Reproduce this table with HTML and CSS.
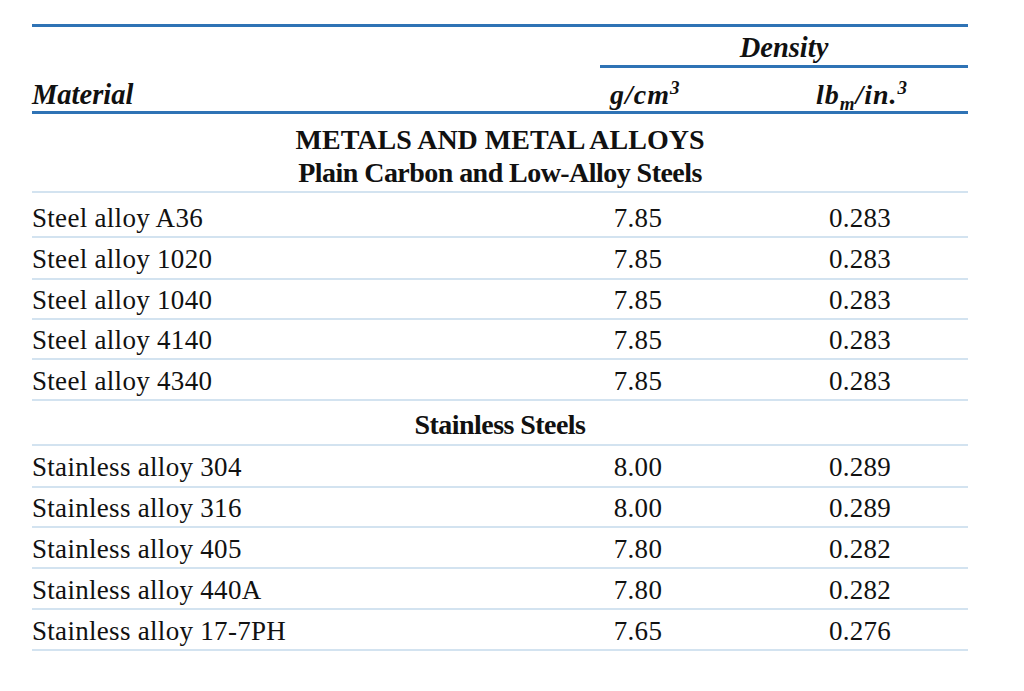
FILE: index.html
```html
<!DOCTYPE html>
<html>
<head>
<meta charset="utf-8">
<link rel="stylesheet" href="styles.css">
</head>
<body>
<table class="density-table">
  <colgroup>
    <col class="col-material">
    <col class="col-metric">
    <col class="col-imperial">
  </colgroup>
  <thead>
    <tr class="head-top">
      <th class="material" rowspan="2">Material</th>
      <th class="density" colspan="2">Density</th>
    </tr>
    <tr class="head-units">
      <th class="metric">g/cm<sup>3</sup></th>
      <th class="imperial">lb<sub>m</sub>/in.<sup>3</sup></th>
    </tr>
  </thead>
  <tbody>
    <tr class="section section-double">
      <td colspan="3"><div class="caps">METALS AND METAL ALLOYS</div><div class="sub">Plain Carbon and Low-Alloy Steels</div></td>
    </tr>
    <tr class="row first"><td>Steel alloy A36</td><td class="num">7.85</td><td class="num2">0.283</td></tr>
    <tr class="row second"><td>Steel alloy 1020</td><td class="num">7.85</td><td class="num2">0.283</td></tr>
    <tr class="row short"><td>Steel alloy 1040</td><td class="num">7.85</td><td class="num2">0.283</td></tr>
    <tr class="row short"><td>Steel alloy 4140</td><td class="num">7.85</td><td class="num2">0.283</td></tr>
    <tr class="row"><td>Steel alloy 4340</td><td class="num">7.85</td><td class="num2">0.283</td></tr>
    <tr class="section section-single">
      <td colspan="3"><div class="sub">Stainless Steels</div></td>
    </tr>
    <tr class="row second"><td>Stainless alloy 304</td><td class="num">8.00</td><td class="num2">0.289</td></tr>
    <tr class="row short"><td>Stainless alloy 316</td><td class="num">8.00</td><td class="num2">0.289</td></tr>
    <tr class="row"><td>Stainless alloy 405</td><td class="num">7.80</td><td class="num2">0.282</td></tr>
    <tr class="row"><td>Stainless alloy 440A</td><td class="num">7.80</td><td class="num2">0.282</td></tr>
    <tr class="row"><td>Stainless alloy 17-7PH</td><td class="num">7.65</td><td class="num2">0.276</td></tr>
  </tbody>
</table>
</body>
</html>
```
FILE: styles.css
```css
html, body {
  margin: 0;
  padding: 0;
  background: #ffffff;
}
body {
  font-family: "Liberation Serif", "Times New Roman", serif;
  color: #111111;
}
.density-table {
  margin: 24px 0 0 32px;
  width: 936px;
  table-layout: fixed;
  border-collapse: collapse;
  border-top: 3px solid #2f73b5;
}
.col-material { width: 568px; }
.col-metric { width: 76px; }
.col-imperial { width: 292px; }
th, td {
  padding: 0;
}
th {
  font-weight: bold;
  font-style: italic;
  font-size: 28.5px;
}
.head-top { height: 41px; }
.head-top .density {
  text-align: center;
  border-bottom: 3px solid #2f73b5;
  vertical-align: middle;
  padding-top: 3px;
}
.material {
  text-align: left;
  vertical-align: bottom;
  line-height: 30px;
  padding-bottom: 1px;
  border-bottom: 3px solid #2f73b5;
}
.head-units { height: 46px; }
.head-units th {
  border-bottom: 3px solid #2f73b5;
  vertical-align: bottom;
  line-height: 30px;
  padding-bottom: 1px;
  white-space: nowrap;
  font-size: 28px;
  letter-spacing: 1px;
}
.metric { text-align: center; padding-left: 10px; }
.imperial { text-align: center; padding-left: 80px; }
sup, sub { font-size: 68%; line-height: 0; }
sup { vertical-align: 0.5em; }
sub { vertical-align: -0.3em; }
.section td {
  text-align: center;
  font-weight: bold;
  border-bottom: 2px solid #d3e3f0;
  vertical-align: middle;
}
.section-double { height: 79px; }
.section-double td { padding-top: 7px; }
.section-single { height: 45px; }
.section-single td { padding-top: 4px; }
.caps { font-size: 28px; line-height: 33px; }
.sub { font-size: 28px; line-height: 33px; letter-spacing: -0.55px; }
.row { height: 41px; }
.row.first { height: 45px; }
.row.second { height: 42px; }
.row.short { height: 40px; }
.row td {
  font-size: 27px;
  letter-spacing: 0.3px;
  border-bottom: 2px solid #d3e3f0;
  vertical-align: middle;
  white-space: nowrap;
  padding-top: 4px;
}
.row.first td { padding-top: 8px; }
.row .num { text-align: center; }
.row .num2 { text-align: center; padding-left: 76px; }
```
